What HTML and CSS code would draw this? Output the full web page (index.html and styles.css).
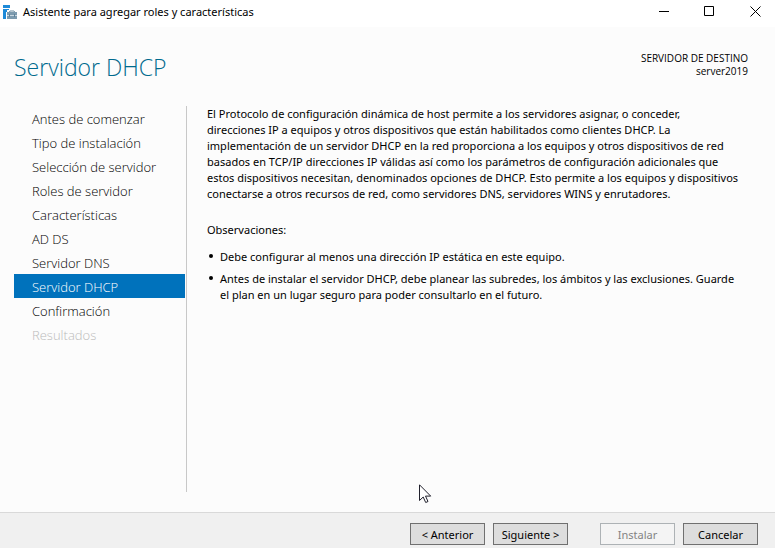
FILE: index.html
```html
<!DOCTYPE html>
<html lang="es">
<head>
<meta charset="utf-8">
<title>Asistente para agregar roles y características</title>
<link rel="stylesheet" href="styles.css">
</head>
<body>
<div class="window">
  <header class="titlebar">
    <svg class="app-icon" width="16" height="16" viewBox="0 0 16 16" aria-hidden="true">
      <path fill="#1e8ad8" d="M0 1h7v3H0zM0 5h6v1H4v2H3v7H0z"/>
      <path fill="none" stroke="#6a8a9e" d="M6 8.500l1-1.500h4l1 1.500"/>
      <path fill="#7c9aae" d="M4 8h10v3H4zM4 12h10v3H4z"/>
      <path fill="#c9d7e0" d="M4 11h10v1H4z"/>
      <path fill="#5c8098" d="M6 10h1v3H6zM11 10h1v3h-1z"/>
    </svg>
    <span class="title">Asistente para agregar roles y características</span>
    <div class="window-controls">
      <button type="button" aria-label="Minimizar"><svg width="11" height="11" viewBox="0 0 11 11"><path d="M1 5.500h10"/></svg></button>
      <button type="button" aria-label="Maximizar"><svg width="11" height="11" viewBox="0 0 11 11"><path d="M.5.500h9v9h-9z"/></svg></button>
      <button type="button" aria-label="Cerrar"><svg width="11" height="11" viewBox="0 0 11 11"><path d="M.5.500l10 10M10.500.500l-10 10"/></svg></button>
    </div>
  </header>

  <div class="heading">
    <h1>Servidor DHCP</h1>
    <p class="target">SERVIDOR DE DESTINO<br>server2019</p>
  </div>

  <div class="body">
    <nav class="steps">
      <a href="#">Antes de comenzar</a>
      <a href="#">Tipo de instalación</a>
      <a href="#">Selección de servidor</a>
      <a href="#">Roles de servidor</a>
      <a href="#">Características</a>
      <a href="#">AD DS</a>
      <a href="#">Servidor DNS</a>
      <a href="#" class="current" aria-current="step">Servidor DHCP</a>
      <a href="#">Confirmación</a>
      <a class="disabled" aria-disabled="true">Resultados</a>
    </nav>
    <main class="content">
      <p>El Protocolo de configuración dinámica de host permite a los servidores asignar, o conceder,<br>
      direcciones IP a equipos y otros dispositivos que están habilitados como clientes DHCP. La<br>
      implementación de un servidor DHCP en la red proporciona a los equipos y otros dispositivos de red<br>
      basados en TCP/IP direcciones IP válidas así como los parámetros de configuración adicionales que<br>
      estos dispositivos necesitan, denominados opciones de DHCP. Esto permite a los equipos y dispositivos<br>
      conectarse a otros recursos de red, como servidores DNS, servidores WINS y enrutadores.</p>
      <p>Observaciones:</p>
      <ul>
        <li>Debe configurar al menos una dirección IP estática en este equipo.</li>
        <li>Antes de instalar el servidor DHCP, debe planear las subredes, los ámbitos y las exclusiones. Guarde<br>
        el plan en un lugar seguro para poder consultarlo en el futuro.</li>
      </ul>
    </main>
  </div>

  <footer class="actions">
    <button type="button">&lt; Anterior</button>
    <button type="button">Siguiente &gt;</button>
    <button type="button" class="install" disabled>Instalar</button>
    <button type="button">Cancelar</button>
  </footer>

  <svg class="pointer" width="13" height="20" viewBox="0 0 13 20" aria-hidden="true">
    <path fill="#fff" stroke="#20202c" d="M.5.800v15.700l3.700-3.500 2.500 5.500 2.300-1-2.500-5.400h5.200z"/>
  </svg>
</div>
</body>
</html>
```

FILE: styles.css
```css
* {
  box-sizing: border-box;
}

body {
  margin: 0;
  background: #fcfcfc;
  color: #000;
  font: 11px/16px "Noto Sans", "Open Sans", sans-serif;
}

.window {
  position: relative;
  display: flex;
  flex-direction: column;
  min-height: 100vh;
  overflow: hidden;
}

.titlebar {
  display: flex;
  align-items: center;
  height: 27px;
  padding: 0 5px 4px 3px;
  background: #fff;
}

.title {
  margin-left: 4px;
}

.window-controls {
  display: flex;
  gap: 16px;
  margin-left: auto;
}

.window-controls button {
  display: grid;
  place-items: center;
  width: 30px;
  height: 22px;
  padding: 0;
  border: 0;
  background: none;
}

.window-controls path {
  fill: none;
  stroke: #000;
}

.heading {
  display: flex;
  justify-content: space-between;
  height: 79px;
  padding: 24px 27px 0 14px;
}

h1 {
  margin: 0;
  color: #006a8e;
  font: 300 23px/32px "Open Sans", "Noto Sans", sans-serif;
}

.target {
  margin: 1px 0 0;
  font-family: "Open Sans", "Noto Sans", sans-serif;
  font-size: 10px;
  line-height: 13px;
  text-align: right;
}

.body {
  display: flex;
  flex: 1;
  padding: 0 0 20px 14px;
}

.steps {
  flex: none;
  width: 173px;
  padding-right: 1px;
  border-right: 1px solid #c8c8c8;
  font-family: "Open Sans", "Noto Sans", sans-serif;
  font-size: 13px;
  font-weight: 300;
  line-height: 24px;
}

.steps a {
  display: block;
  height: 24px;
  padding: 1px 0 0 18px;
  color: #000;
  text-decoration: none;
}

.steps .current {
  background: #0072bc;
  color: #fff;
}

.steps .disabled {
  color: #bbb;
}

.content {
  flex: 1;
  padding-left: 20px;
  white-space: nowrap;
}

.content p {
  margin: 0 0 20px;
}

.content ul {
  margin: -9px 0 0;
  padding-left: 13px;
  list-style: none;
}

.content li {
  position: relative;
  margin-bottom: 6px;
}

.content li::before {
  content: "";
  position: absolute;
  top: 5px;
  left: -11px;
  width: 4px;
  height: 4px;
  border-radius: 50%;
  background: #000;
}

.actions {
  display: flex;
  justify-content: flex-end;
  gap: 8px;
  padding: 10px 17px 3px;
  border-top: 1px solid #d9d9d9;
  background: #f0f0f0;
}

.actions button {
  width: 75px;
  height: 22px;
  padding: 1px 0 0;
  border: 1px solid #707070;
  background: #ddd;
  color: #000;
  font: inherit;
}

.actions .install {
  margin-left: 24px;
  border-color: #adb2b5;
  background: #f4f4f4;
  color: #838383;
}

.pointer {
  position: absolute;
  top: 484px;
  left: 419px;
}
```
